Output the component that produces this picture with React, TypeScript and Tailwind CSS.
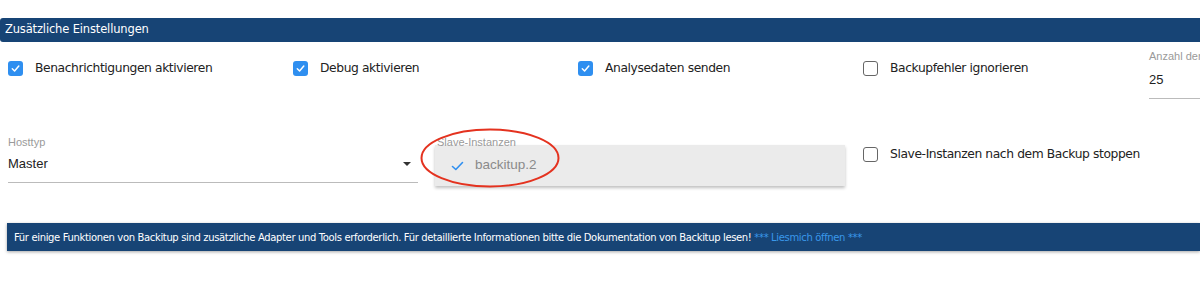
import React from "react";

const sysFont = { fontFamily: '"DejaVu Sans", "Liberation Sans", sans-serif' };

function CheckBox({ checked, label }: { checked?: boolean; label: string }) {
  return (
    <div className="flex items-center">
      {checked ? (
        <span className="flex h-[15px] w-[15px] shrink-0 items-center justify-center rounded-[3px] bg-[#2f8ff0]">
          <svg width="11" height="11" viewBox="0 0 12 12">
            <path d="M2.5 6.3 L5 8.7 L9.6 3.3" fill="none" stroke="white" strokeWidth="1.6" strokeLinecap="round" strokeLinejoin="round" />
          </svg>
        </span>
      ) : (
        <span className="h-[15px] w-[15px] shrink-0 rounded-[3px] border-[1.5px] border-[#666] bg-white" />
      )}
      <span className="ml-[12px] whitespace-nowrap text-[12.3px] tracking-[-0.4px] text-[#222]" style={sysFont}>
        {label}
      </span>
    </div>
  );
}

export default function App() {
  return (
    <div className="relative h-[295px] w-[1200px] overflow-hidden bg-white" style={{ fontFamily: '"Liberation Sans", Arial, sans-serif' }}>
      <div className="mt-[18px] flex h-[24px] items-center rounded-l-[3px] bg-[#174475] pl-[5px] text-[11.5px] tracking-[-0.15px] text-white" style={sysFont}>
        Zusätzliche Einstellungen
      </div>

      {/* erste Reihe */}
      <div className="flex h-[88px]">
        <div className="w-[285px] shrink-0 pl-[8px] pt-[17px]">
          <CheckBox checked label="Benachrichtigungen aktivieren" />
        </div>
        <div className="w-[285px] shrink-0 pl-[8px] pt-[17px]">
          <CheckBox checked label="Debug aktivieren" />
        </div>
        <div className="w-[285px] shrink-0 pl-[8px] pt-[17px]">
          <CheckBox checked label="Analysedaten senden" />
        </div>
        <div className="w-[285px] shrink-0 pl-[8px] pt-[17px]">
          <CheckBox label="Backupfehler ignorieren" />
        </div>
        <div className="w-[270px] shrink-0 pl-[9px] pt-[8px]">
          <div className="whitespace-nowrap text-[11px] leading-[13px] text-[#9a9a9a]">Anzahl der Backups</div>
          <div className="border-b border-[#bbb] pb-[11px] pt-[9px] text-[13px] leading-[15px] text-[#222]">25</div>
        </div>
      </div>

      {/* zweite Reihe */}
      <div className="flex">
        <div className="w-[427px] shrink-0 pl-[8px] pr-[9px] pt-[6px]">
          <div className="text-[11px] leading-[13px] text-[#9a9a9a]">Hosttyp</div>
          <div className="flex items-center justify-between border-b border-[#bbb] pb-[11px] pt-[7px]">
            <span className="text-[13px] leading-[15px] text-[#222]">Master</span>
            <svg width="10" height="6" viewBox="0 0 10 6" className="mr-[6px]">
              <path d="M1 1 L9 1 L5 5 Z" fill="#333" />
            </svg>
          </div>
        </div>
        <div className="w-[427px] shrink-0 pl-[8px] pr-[9px] pt-[6px]">
          <div className="pl-[2px] text-[11px] leading-[13px] text-[#9a9a9a]">Slave-Instanzen</div>
          <div className="-mt-[4px] flex h-[41px] items-center bg-[#ebebeb] pl-[16px] shadow-[0_2px_3px_rgba(0,0,0,0.25)]">
            <svg width="13" height="10" viewBox="0 0 13 10">
              <path d="M1.5 5.5 L4.8 8.5 L11.5 1.5" fill="none" stroke="#2f8ff0" strokeWidth="1.6" strokeLinecap="round" strokeLinejoin="round" />
            </svg>
            <span className="ml-[11px] text-[13.5px] text-[#8a8a8a]">backitup.2</span>
          </div>
        </div>
        <div className="flex-1 pl-[9px] pt-[15px]">
          <CheckBox label="Slave-Instanzen nach dem Backup stoppen" />
        </div>
      </div>

      {/* Hinweis */}
      <div className="ml-[7px] mt-[37px] flex h-[28px] items-center bg-[#174475] pl-[7px] text-[10px] tracking-[-0.35px] text-white shadow-[0_1px_3px_rgba(0,0,0,0.35)]" style={sysFont}>
        <span className="whitespace-nowrap">
          Für einige Funktionen von Backitup sind zusätzliche Adapter und Tools erforderlich. Für detaillierte Informationen bitte die Dokumentation von Backitup lesen!{" "}
          <span className="text-[#3a98ea]">*** Liesmich öffnen ***</span>
        </span>
      </div>

      {/* Markierung */}
      <svg className="pointer-events-none absolute left-[418px] top-[126px]" width="146" height="64" viewBox="0 0 146 64">
        <ellipse cx="72" cy="32" rx="68.5" ry="28.5" fill="none" stroke="#e4321f" strokeWidth="2" />
      </svg>
    </div>
  );
}
